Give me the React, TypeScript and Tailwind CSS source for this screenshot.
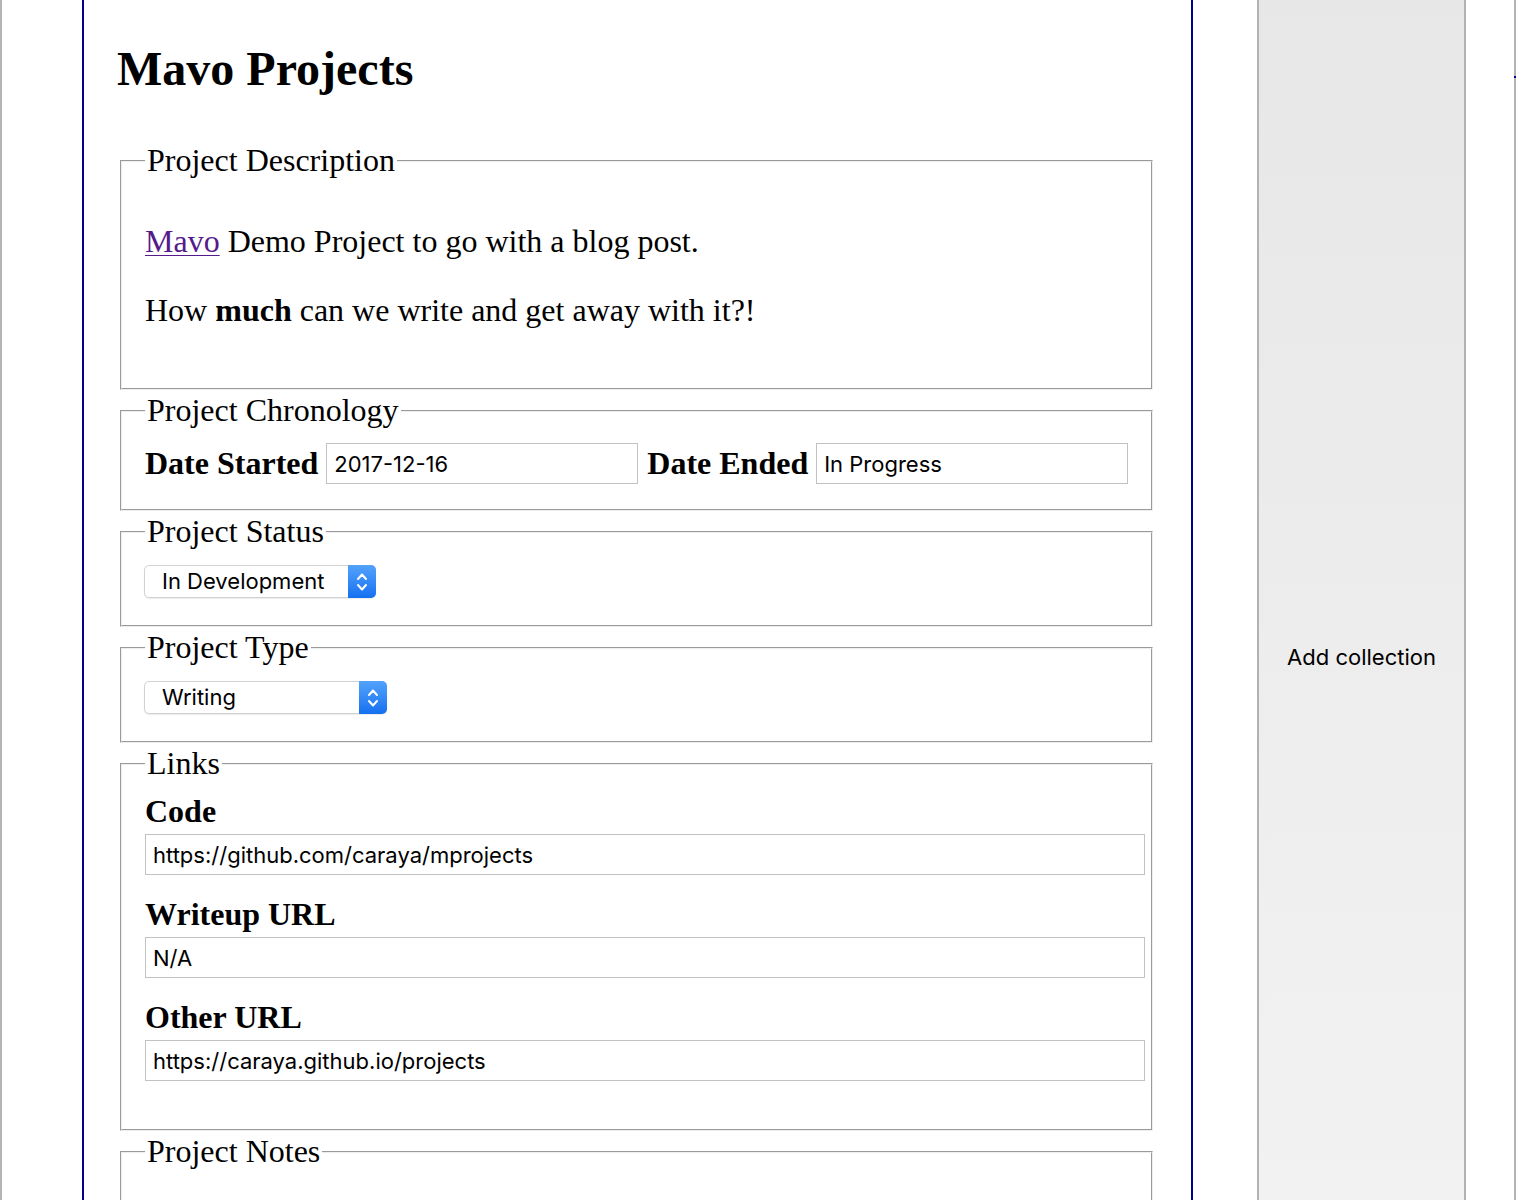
import React from "react";

function Group({ title, className, children }: { title: string; className?: string; children?: React.ReactNode }) {
  return (
    <fieldset
      className={
        "mx-[2px] min-w-0 border-2 border-[#eeeeee] [border-style:groove] pl-[23px] pr-[6px] " + (className ?? "")
      }
    >
      <legend className="px-[2px] text-[32px] leading-[33px]">{title}</legend>
      {children}
    </fieldset>
  );
}

function TextBox({ value, className }: { value: string; className?: string }) {
  return (
    <input
      readOnly
      value={value}
      className={
        "h-[41px] border border-[#c2c2c2] bg-white px-[7px] font-['Inter','Liberation_Sans',sans-serif] text-[22px] text-black outline-none " +
        (className ?? "")
      }
    />
  );
}

function Picker({ value, width }: { value: string; width: string }) {
  return (
    <div
      className={
        "-ml-[1px] flex h-[33px] items-stretch rounded-[5px] border border-[#d2d2d2] bg-white shadow-[0_1px_1px_rgba(0,0,0,0.08)] " +
        width
      }
    >
      <span className="flex flex-1 items-center pl-[17px] font-['Inter','Liberation_Sans',sans-serif] text-[22px] text-black">
        {value}
      </span>
      <span className="-my-px -mr-px flex w-[28px] items-center justify-center rounded-r-[5px] bg-linear-to-b from-[#52a2fb] to-[#1470f0]">
        <svg width="14" height="28" viewBox="0 0 14 28" fill="none" stroke="white" strokeWidth="2" strokeLinecap="round" strokeLinejoin="round">
          <path d="M3 11 L7 6.5 L11 11" />
          <path d="M3 17 L7 21.5 L11 17" />
        </svg>
      </span>
    </div>
  );
}

export default function App() {
  return (
    <div className="flex h-[1200px] overflow-hidden bg-white font-['Liberation_Serif','Times_New_Roman',serif] text-black">
      {/* left edge */}
      <div className="w-[2px] shrink-0 bg-[#b4b4b4]" />

      {/* main editor */}
      <div className="ml-[80px] w-[1111px] shrink-0 border-x-2 border-[#000090] pl-[33px] pr-[36px] pt-[41px]">
        <h1 className="text-[48px] font-bold leading-[55px]">Mavo Projects</h1>

        <div className="pl-px">
          <Group title="Project Description" className="mt-[48px] pb-[27px] pt-[14px]">
            <p className="my-8 text-[32px] leading-[37px]">
              <a href="#" className="text-[#551a8b] underline decoration-1 underline-offset-[3px]">
                Mavo
              </a>{" "}
              Demo Project to go with a blog post.
            </p>
            <p className="my-8 text-[32px] leading-[37px]">
              How <b>much</b> can we write and get away with it?!
            </p>
          </Group>

          <Group title="Project Chronology" className="mt-[4px] pb-[25px] pt-[16px]">
            <div className="flex items-center">
              <label className="text-[32px] font-bold leading-[37px]">Date Started</label>
              <TextBox value="2017-12-16" className="ml-[8px] w-[312px]" />
              <label className="ml-[9px] text-[32px] font-bold leading-[37px]">Date Ended</label>
              <TextBox value="In Progress" className="ml-[8px] w-[312px]" />
            </div>
          </Group>

          <Group title="Project Status" className="mt-[4px] pb-[27px] pt-[17px]">
            <Picker value="In Development" width="w-[232px]" />
          </Group>

          <Group title="Project Type" className="mt-[4px] pb-[27px] pt-[17px]">
            <Picker value="Writing" width="w-[243px]" />
          </Group>

          <Group title="Links" className="mt-[4px] pb-[48px] pt-[13px]">
            <div className="flex flex-col">
              <label className="text-[32px] font-bold leading-[37px]">Code</label>
              <TextBox value="https://github.com/caraya/mprojects" className="mt-[4px] w-full" />
              <label className="mt-[21px] text-[32px] font-bold leading-[37px]">Writeup URL</label>
              <TextBox value="N/A" className="mt-[4px] w-full" />
              <label className="mt-[21px] text-[32px] font-bold leading-[37px]">Other URL</label>
              <TextBox value="https://caraya.github.io/projects" className="mt-[4px] w-full" />
            </div>
          </Group>

          <Group title="Project Notes" className="mt-[4px] h-[200px] pt-[12px]" />
        </div>
      </div>

      {/* add collection button */}
      <div className="ml-[64px] flex h-[1314px] w-[209px] shrink-0 items-center justify-center border-x-2 border-[#b2b2b2] bg-linear-to-b from-[#e7e7e7] to-[#f3f3f3]">
        <span className="font-['Inter','Liberation_Sans',sans-serif] text-[22px] text-black">Add collection</span>
      </div>

      {/* right edge */}
      <div className="ml-[48px] flex w-[2px] shrink-0 flex-col bg-[#b4b4b4]">
        <div className="mt-[76px] h-[2px] w-[2px] bg-[#000090]" />
      </div>
    </div>
  );
}
